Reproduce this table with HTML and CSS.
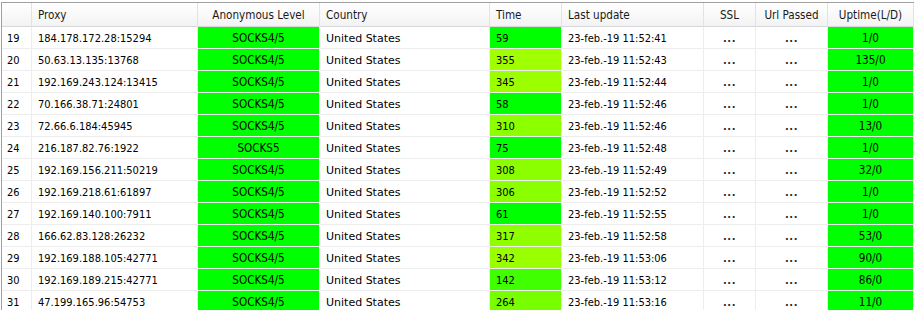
FILE: index.html
```html
<!DOCTYPE html>
<html>
<head>
<meta charset="utf-8">
<link rel="stylesheet" href="styles.css">
</head>
<body>
<div class="frame">
  <div class="grid">
    <div class="h"></div>
    <div class="h l">Proxy</div>
    <div class="h c">Anonymous Level</div>
    <div class="h l">Country</div>
    <div class="h l">Time</div>
    <div class="h l">Last update</div>
    <div class="h c">SSL</div>
    <div class="h c">Url Passed</div>
    <div class="h c">Uptime(L/D)</div>

    <div class="d n">19</div><div class="d l">184.178.172.28:15294</div><div class="d c g">SOCKS4/5</div><div class="d l w">United States</div><div class="d l" style="background:#00ff00">59</div><div class="d l">23-feb.-19 11:52:41</div><div class="d c dots">...</div><div class="d c dots">...</div><div class="d c g">1/0</div>
    <div class="d n">20</div><div class="d l">50.63.13.135:13768</div><div class="d c g">SOCKS4/5</div><div class="d l w">United States</div><div class="d l" style="background:#a0ff00">355</div><div class="d l">23-feb.-19 11:52:43</div><div class="d c dots">...</div><div class="d c dots">...</div><div class="d c g">135/0</div>
    <div class="d n">21</div><div class="d l">192.169.243.124:13415</div><div class="d c g">SOCKS4/5</div><div class="d l w">United States</div><div class="d l" style="background:#9bff00">345</div><div class="d l">23-feb.-19 11:52:44</div><div class="d c dots">...</div><div class="d c dots">...</div><div class="d c g">1/0</div>
    <div class="d n">22</div><div class="d l">70.166.38.71:24801</div><div class="d c g">SOCKS4/5</div><div class="d l w">United States</div><div class="d l" style="background:#00ff00">58</div><div class="d l">23-feb.-19 11:52:46</div><div class="d c dots">...</div><div class="d c dots">...</div><div class="d c g">1/0</div>
    <div class="d n">23</div><div class="d l">72.66.6.184:45945</div><div class="d c g">SOCKS4/5</div><div class="d l w">United States</div><div class="d l" style="background:#8cff00">310</div><div class="d l">23-feb.-19 11:52:46</div><div class="d c dots">...</div><div class="d c dots">...</div><div class="d c g">13/0</div>
    <div class="d n">24</div><div class="d l">216.187.82.76:1922</div><div class="d c g">SOCKS5</div><div class="d l w">United States</div><div class="d l" style="background:#00ff00">75</div><div class="d l">23-feb.-19 11:52:48</div><div class="d c dots">...</div><div class="d c dots">...</div><div class="d c g">1/0</div>
    <div class="d n">25</div><div class="d l">192.169.156.211:50219</div><div class="d c g">SOCKS4/5</div><div class="d l w">United States</div><div class="d l" style="background:#8bff00">308</div><div class="d l">23-feb.-19 11:52:49</div><div class="d c dots">...</div><div class="d c dots">...</div><div class="d c g">32/0</div>
    <div class="d n">26</div><div class="d l">192.169.218.61:61897</div><div class="d c g">SOCKS4/5</div><div class="d l w">United States</div><div class="d l" style="background:#8aff00">306</div><div class="d l">23-feb.-19 11:52:52</div><div class="d c dots">...</div><div class="d c dots">...</div><div class="d c g">1/0</div>
    <div class="d n">27</div><div class="d l">192.169.140.100:7911</div><div class="d c g">SOCKS4/5</div><div class="d l w">United States</div><div class="d l" style="background:#00ff00">61</div><div class="d l">23-feb.-19 11:52:55</div><div class="d c dots">...</div><div class="d c dots">...</div><div class="d c g">1/0</div>
    <div class="d n">28</div><div class="d l">166.62.83.128:26232</div><div class="d c g">SOCKS4/5</div><div class="d l w">United States</div><div class="d l" style="background:#8fff00">317</div><div class="d l">23-feb.-19 11:52:58</div><div class="d c dots">...</div><div class="d c dots">...</div><div class="d c g">53/0</div>
    <div class="d n">29</div><div class="d l">192.169.188.105:42771</div><div class="d c g">SOCKS4/5</div><div class="d l w">United States</div><div class="d l" style="background:#9aff00">342</div><div class="d l">23-feb.-19 11:53:06</div><div class="d c dots">...</div><div class="d c dots">...</div><div class="d c g">90/0</div>
    <div class="d n">30</div><div class="d l">192.169.189.215:42771</div><div class="d c g">SOCKS4/5</div><div class="d l w">United States</div><div class="d l" style="background:#40ff00">142</div><div class="d l">23-feb.-19 11:53:12</div><div class="d c dots">...</div><div class="d c dots">...</div><div class="d c g">86/0</div>
    <div class="d n">31</div><div class="d l">47.199.165.96:54753</div><div class="d c g">SOCKS4/5</div><div class="d l w">United States</div><div class="d l" style="background:#77ff00">264</div><div class="d l">23-feb.-19 11:53:16</div><div class="d c dots">...</div><div class="d c dots">...</div><div class="d c g">11/0</div>
  </div>
</div>
</body>
</html>
```

FILE: styles.css
```css
html, body {
  margin: 0;
  padding: 0;
  background: #ffffff;
  overflow: hidden;
}
body {
  font-family: "DejaVu Sans Condensed", "DejaVu Sans", sans-serif;
  font-size: 11px;
  color: #000;
}
.frame {
  margin: 2px 0 0 1px;
  width: 912px;
  border-top: 1px solid #a0a0a0;
  border-left: 1px solid #a0a0a0;
}
.grid {
  display: grid;
  grid-template-columns: 30px 166px 122px 170px 72px 142px 52px 72px 86px;
  grid-auto-rows: 22px;
  grid-template-rows: 24px;
}
.h {
  background: linear-gradient(#ffffff, #f3f3f4);
  border-right: 1px solid #e2e3e6;
  border-bottom: 1px solid #d8d8dc;
  display: flex;
  align-items: center;
  color: #1a1a1a;
  white-space: nowrap;
  font-size: 11.6px;
}
.d {
  border-right: 1px solid #ededed;
  border-bottom: 1px solid #ededed;
  display: flex;
  align-items: center;
  white-space: nowrap;
  padding-top: 1px;
}
.l { padding-left: 6px; }
.n { padding-left: 5px; }
.c { justify-content: center; }
.w { font-family: "DejaVu Sans", sans-serif; }
.g { background: #00ff00; }
.g.c { font-size: 11.6px; }
.dots { color: #2a2a2a; font-weight: bold; letter-spacing: 0.5px; }
```
